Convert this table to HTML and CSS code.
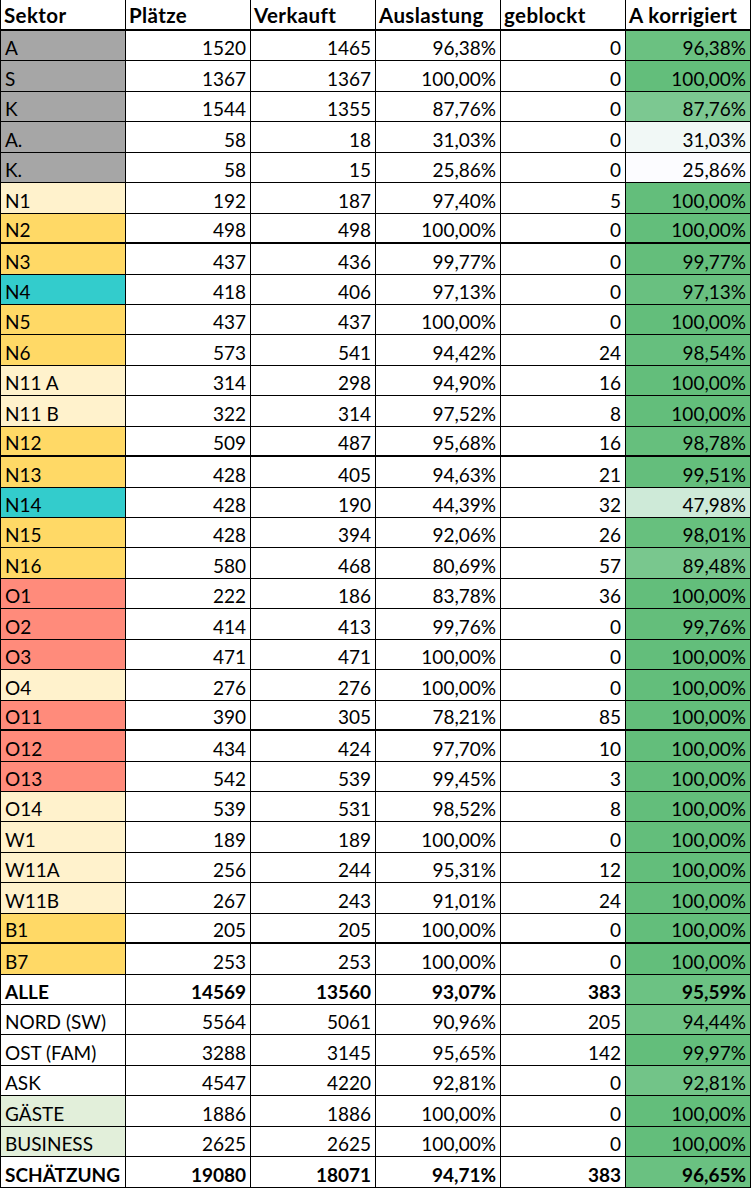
FILE: index.html
```html
<!DOCTYPE html>
<html lang="de">
<head>
<meta charset="utf-8">
<title>Auslastung</title>
<link rel="stylesheet" href="styles.css">
</head>
<body>
<div class="sheet">
  <div class="row head"><div class="c">Sektor</div><div class="c">Plätze</div><div class="c">Verkauft</div><div class="c">Auslastung</div><div class="c">geblockt</div><div class="c">A korrigiert</div></div>
  <div class="row"><div class="c name gray">A</div><div class="c">1520</div><div class="c">1465</div><div class="c">96,38%</div><div class="c">0</div><div class="c" style="background:#6BC181">96,38%</div></div>
  <div class="row"><div class="c name gray">S</div><div class="c">1367</div><div class="c">1367</div><div class="c">100,00%</div><div class="c">0</div><div class="c" style="background:#63BE7B">100,00%</div></div>
  <div class="row"><div class="c name gray">K</div><div class="c">1544</div><div class="c">1355</div><div class="c">87,76%</div><div class="c">0</div><div class="c" style="background:#7CC891">87,76%</div></div>
  <div class="row"><div class="c name gray">A.</div><div class="c">58</div><div class="c">18</div><div class="c">31,03%</div><div class="c">0</div><div class="c" style="background:#F1F8F6">31,03%</div></div>
  <div class="row"><div class="c name gray">K.</div><div class="c">58</div><div class="c">15</div><div class="c">25,86%</div><div class="c">0</div><div class="c" style="background:#FCFCFF">25,86%</div></div>
  <div class="row"><div class="c name cream">N1</div><div class="c">192</div><div class="c">187</div><div class="c">97,40%</div><div class="c">5</div><div class="c" style="background:#63BE7B">100,00%</div></div>
  <div class="row thick"><div class="c name yellow">N2</div><div class="c">498</div><div class="c">498</div><div class="c">100,00%</div><div class="c">0</div><div class="c" style="background:#63BE7B">100,00%</div></div>
  <div class="row"><div class="c name yellow">N3</div><div class="c">437</div><div class="c">436</div><div class="c">99,77%</div><div class="c">0</div><div class="c" style="background:#64BE7B">99,77%</div></div>
  <div class="row"><div class="c name teal">N4</div><div class="c">418</div><div class="c">406</div><div class="c">97,13%</div><div class="c">0</div><div class="c" style="background:#69C080">97,13%</div></div>
  <div class="row"><div class="c name yellow">N5</div><div class="c">437</div><div class="c">437</div><div class="c">100,00%</div><div class="c">0</div><div class="c" style="background:#63BE7B">100,00%</div></div>
  <div class="row"><div class="c name yellow">N6</div><div class="c">573</div><div class="c">541</div><div class="c">94,42%</div><div class="c">24</div><div class="c" style="background:#66BF7E">98,54%</div></div>
  <div class="row"><div class="c name cream">N11 A</div><div class="c">314</div><div class="c">298</div><div class="c">94,90%</div><div class="c">16</div><div class="c" style="background:#63BE7B">100,00%</div></div>
  <div class="row"><div class="c name cream">N11 B</div><div class="c">322</div><div class="c">314</div><div class="c">97,52%</div><div class="c">8</div><div class="c" style="background:#63BE7B">100,00%</div></div>
  <div class="row thick"><div class="c name yellow">N12</div><div class="c">509</div><div class="c">487</div><div class="c">95,68%</div><div class="c">16</div><div class="c" style="background:#66BF7D">98,78%</div></div>
  <div class="row"><div class="c name yellow">N13</div><div class="c">428</div><div class="c">405</div><div class="c">94,63%</div><div class="c">21</div><div class="c" style="background:#64BE7C">99,51%</div></div>
  <div class="row"><div class="c name teal">N14</div><div class="c">428</div><div class="c">190</div><div class="c">44,39%</div><div class="c">32</div><div class="c" style="background:#CEEAD8">47,98%</div></div>
  <div class="row"><div class="c name yellow">N15</div><div class="c">428</div><div class="c">394</div><div class="c">92,06%</div><div class="c">26</div><div class="c" style="background:#67C07E">98,01%</div></div>
  <div class="row"><div class="c name yellow">N16</div><div class="c">580</div><div class="c">468</div><div class="c">80,69%</div><div class="c">57</div><div class="c" style="background:#79C78E">89,48%</div></div>
  <div class="row"><div class="c name salmon">O1</div><div class="c">222</div><div class="c">186</div><div class="c">83,78%</div><div class="c">36</div><div class="c" style="background:#63BE7B">100,00%</div></div>
  <div class="row"><div class="c name salmon">O2</div><div class="c">414</div><div class="c">413</div><div class="c">99,76%</div><div class="c">0</div><div class="c" style="background:#64BE7B">99,76%</div></div>
  <div class="row"><div class="c name salmon">O3</div><div class="c">471</div><div class="c">471</div><div class="c">100,00%</div><div class="c">0</div><div class="c" style="background:#63BE7B">100,00%</div></div>
  <div class="row"><div class="c name cream">O4</div><div class="c">276</div><div class="c">276</div><div class="c">100,00%</div><div class="c">0</div><div class="c" style="background:#63BE7B">100,00%</div></div>
  <div class="row thick"><div class="c name salmon">O11</div><div class="c">390</div><div class="c">305</div><div class="c">78,21%</div><div class="c">85</div><div class="c" style="background:#63BE7B">100,00%</div></div>
  <div class="row"><div class="c name salmon">O12</div><div class="c">434</div><div class="c">424</div><div class="c">97,70%</div><div class="c">10</div><div class="c" style="background:#63BE7B">100,00%</div></div>
  <div class="row"><div class="c name salmon">O13</div><div class="c">542</div><div class="c">539</div><div class="c">99,45%</div><div class="c">3</div><div class="c" style="background:#63BE7B">100,00%</div></div>
  <div class="row"><div class="c name cream">O14</div><div class="c">539</div><div class="c">531</div><div class="c">98,52%</div><div class="c">8</div><div class="c" style="background:#63BE7B">100,00%</div></div>
  <div class="row"><div class="c name cream">W1</div><div class="c">189</div><div class="c">189</div><div class="c">100,00%</div><div class="c">0</div><div class="c" style="background:#63BE7B">100,00%</div></div>
  <div class="row"><div class="c name cream">W11A</div><div class="c">256</div><div class="c">244</div><div class="c">95,31%</div><div class="c">12</div><div class="c" style="background:#63BE7B">100,00%</div></div>
  <div class="row"><div class="c name cream">W11B</div><div class="c">267</div><div class="c">243</div><div class="c">91,01%</div><div class="c">24</div><div class="c" style="background:#63BE7B">100,00%</div></div>
  <div class="row thick"><div class="c name yellow">B1</div><div class="c">205</div><div class="c">205</div><div class="c">100,00%</div><div class="c">0</div><div class="c" style="background:#63BE7B">100,00%</div></div>
  <div class="row"><div class="c name yellow">B7</div><div class="c">253</div><div class="c">253</div><div class="c">100,00%</div><div class="c">0</div><div class="c" style="background:#63BE7B">100,00%</div></div>
  <div class="row total"><div class="c name">ALLE</div><div class="c">14569</div><div class="c">13560</div><div class="c">93,07%</div><div class="c">383</div><div class="c" style="background:#6CC283">95,59%</div></div>
  <div class="row"><div class="c name">NORD (SW)</div><div class="c">5564</div><div class="c">5061</div><div class="c">90,96%</div><div class="c">205</div><div class="c" style="background:#6FC385">94,44%</div></div>
  <div class="row"><div class="c name">OST (FAM)</div><div class="c">3288</div><div class="c">3145</div><div class="c">95,65%</div><div class="c">142</div><div class="c" style="background:#63BE7B">99,97%</div></div>
  <div class="row"><div class="c name">ASK</div><div class="c">4547</div><div class="c">4220</div><div class="c">92,81%</div><div class="c">0</div><div class="c" style="background:#72C488">92,81%</div></div>
  <div class="row"><div class="c name mint">GÄSTE</div><div class="c">1886</div><div class="c">1886</div><div class="c">100,00%</div><div class="c">0</div><div class="c" style="background:#63BE7B">100,00%</div></div>
  <div class="row"><div class="c name mint">BUSINESS</div><div class="c">2625</div><div class="c">2625</div><div class="c">100,00%</div><div class="c">0</div><div class="c" style="background:#63BE7B">100,00%</div></div>
  <div class="row total"><div class="c name">SCHÄTZUNG</div><div class="c">19080</div><div class="c">18071</div><div class="c">94,71%</div><div class="c">383</div><div class="c" style="background:#6AC181">96,65%</div></div>
</div>
</body>
</html>
```
FILE: styles.css
```css
html, body {
  margin: 0;
  padding: 0;
  background: #ffffff;
}

.sheet {
  display: grid;
  grid-template-columns: repeat(6, 125px);
  grid-template-rows: 31px repeat(38, 30.45px);
  width: 750px;
  border-left: 1px solid #000;
  font-family: Lato, "Liberation Sans", sans-serif;
  font-size: 19px;
  color: #000;
}

.row {
  display: contents;
}

.c {
  box-sizing: border-box;
  display: flex;
  align-items: flex-end;
  justify-content: flex-end;
  padding: 0 4px 3px 3px;
  line-height: 1;
  border-right: 1px solid #000;
  border-bottom: 1px solid #000;
  white-space: nowrap;
  overflow: hidden;
  background: #ffffff;
}

.c.name {
  justify-content: flex-start;
  padding-left: 4px;
}

.head .c {
  justify-content: flex-start;
  font-size: 20.5px;
  letter-spacing: 0.4px;
  font-weight: 700;
  border-bottom-width: 2px;
  padding-bottom: 4px;
}

.thick .c {
  border-bottom-width: 2px;
}

.total .c {
  font-weight: 700;
}

.gray { background: #A6A6A6; }
.cream { background: #FFF2CC; }
.yellow { background: #FFD966; }
.teal { background: #33CCCC; }
.salmon { background: #FF8B7B; }
.mint { background: #E2EFDA; }
```
